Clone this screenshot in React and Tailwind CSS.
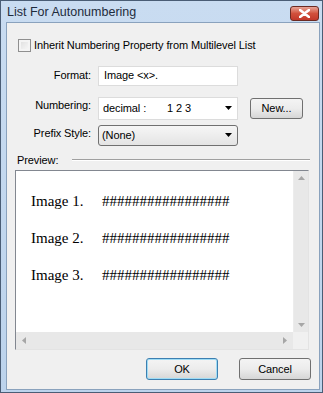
import { useState } from "react";

const ui = { fontFamily: '"Liberation Sans", Arial, sans-serif' };
const serif = { fontFamily: '"Liberation Serif", "Times New Roman", serif' };

function Arrow({ dir = "down", className = "" }) {
  // small filled triangle used in combos and scrollbars
  const pts = {
    down: "0,0 7,0 3.5,4",
    up: "0,4 7,4 3.5,0",
    left: "4,0 4,7 0,3.5",
    right: "0,0 0,7 4,3.5",
  }[dir];
  const w = dir === "left" || dir === "right" ? 4 : 7;
  const h = dir === "left" || dir === "right" ? 7 : 4;
  return (
    <svg width={w} height={h} viewBox={`0 0 ${w} ${h}`} className={className}>
      <polygon points={pts} fill="currentColor" />
    </svg>
  );
}

function Button({ children, primary, className = "" }) {
  return (
    <div
      className={
        "flex items-center justify-center rounded-[3px] border text-[11px] text-black bg-gradient-to-b from-[#f4f4f4] via-[#ececec] to-[#d6d6d6] " +
        (primary ? "border-[#3c7fb1] shadow-[inset_0_0_0_1px_#9fdcf5] " : "border-[#707070] ") +
        className
      }
    >
      {children}
    </div>
  );
}

const rows = ["Image 1.", "Image 2.", "Image 3."];

export default function App() {
  const [inherit, setInherit] = useState(false);

  return (
    <div
      className="w-[323px] h-[393px] bg-gradient-to-b from-[#c9dcf1] to-[#bcd3ec] border border-[#4a5d75] flex flex-col overflow-hidden"
      style={ui}
    >
      {/* title bar */}
      <div className="h-[21px] flex items-center justify-between pl-[6px] pr-[3px] shrink-0">
        <span className="text-[12.5px] text-[#1e2b3c] mt-[2px]">List For Autonumbering</span>
        <div className="w-[29px] h-[15px] mt-[3px] rounded-[3px] border border-[#6b2a22] bg-gradient-to-b from-[#e7a497] via-[#d1503c] to-[#c2382a] flex items-center justify-center">
          <svg width="11" height="9" viewBox="0 0 11 9">
            <path d="M1 1 L10 8 M10 1 L1 8" stroke="#ffffff" strokeWidth="2.6" strokeLinecap="round" />
          </svg>
        </div>
      </div>

      {/* client */}
      <div className="flex-1 ml-[5px] mb-[2px] mr-[2px] border border-[#8aa2bd] bg-[#f0f0f0] flex flex-col tracking-[-0.1px]">
        <label
          className="flex items-center gap-[3px] mt-[14px] ml-[11px] text-[11px] text-black"
          onClick={() => setInherit(!inherit)}
        >
          <span className="w-[13px] h-[13px] border border-[#8f8f8f] bg-gradient-to-br from-[#dcdcdc] to-[#fbfbfb] shadow-[inset_0_0_0_2px_#f4f4f4]" />
          <span>Inherit Numbering Property from Multilevel List</span>
        </label>

        <div className="flex items-center mt-[12px]">
          <span className="w-[84px] text-right text-[11px]">Format:</span>
          <div className="ml-[7px] w-[140px] h-[20px] bg-white border border-[#dcdcdc] flex items-center pl-[5px] text-[11px]">
            Image &lt;x&gt;.
          </div>
        </div>

        <div className="flex items-center mt-[11px]">
          <span className="w-[84px] text-right text-[11px] -mt-[6px]">Numbering:</span>
          <div className="ml-[7px] w-[140px] h-[23px] bg-white border border-[#dcdcdc] flex items-center pl-[4px] pr-[5px] text-[11px]">
            <span className="w-[64px]">decimal :</span>
            <span className="flex-1">1 2 3</span>
            <Arrow className="text-black" />
          </div>
          <Button className="ml-[12px] w-[53px] h-[21px]">New...</Button>
        </div>

        <div className="flex items-center mt-[5px]">
          <span className="w-[84px] text-right text-[11px] -mt-[4px]">Prefix Style:</span>
          <div className="ml-[7px] w-[140px] h-[21px] rounded-[3px] border border-[#707070] bg-gradient-to-b from-[#f6f6f6] to-[#e4e4e4] flex items-center justify-between pl-[3px] pr-[5px] text-[11px]">
            <span>(None)</span>
            <Arrow className="text-black" />
          </div>
        </div>

        <div className="flex items-center mt-[6px] ml-[10px] mr-[9px]">
          <span className="text-[11px]">Preview:</span>
          <div className="flex-1 ml-[14px] mt-[1px] h-[2px] border-t border-[#a0a0a0] border-b border-b-white" />
        </div>

        {/* preview box */}
        <div className="mt-[2px] ml-[8px] w-[294px] h-[180px] border border-[#828790] border-r-[#e3e3e3] border-b-[#e3e3e3] bg-white flex flex-col">
          <div className="flex-1 flex min-h-0">
            <div className="flex-1 flex flex-col pl-[15px] pt-[20px] gap-[17px] tracking-normal" style={serif}>
              {rows.map((r) => (
                <div key={r} className="flex text-[15px] leading-[20px] text-black">
                  <span className="w-[71px]">{r}</span>
                  <span>#################</span>
                </div>
              ))}
            </div>
            <div className="w-[15px] bg-[#e8e8e8] border-l border-[#ececec] flex flex-col justify-between items-center py-[5px] text-[#a6a6a6]">
              <Arrow dir="up" />
              <Arrow dir="down" />
            </div>
          </div>
          <div className="h-[17px] flex shrink-0">
            <div className="flex-1 bg-[#e8e8e8] flex items-center justify-between px-[6px] text-[#a6a6a6]">
              <Arrow dir="left" />
              <Arrow dir="right" />
            </div>
            <div className="w-[15px] bg-[#f0f0f0]" />
          </div>
        </div>

        <div className="flex justify-end gap-[21px] mt-[8px] mr-[8px]">
          <Button primary className="w-[72px] h-[22px]">OK</Button>
          <Button className="w-[72px] h-[22px]">Cancel</Button>
        </div>
      </div>
    </div>
  );
}
